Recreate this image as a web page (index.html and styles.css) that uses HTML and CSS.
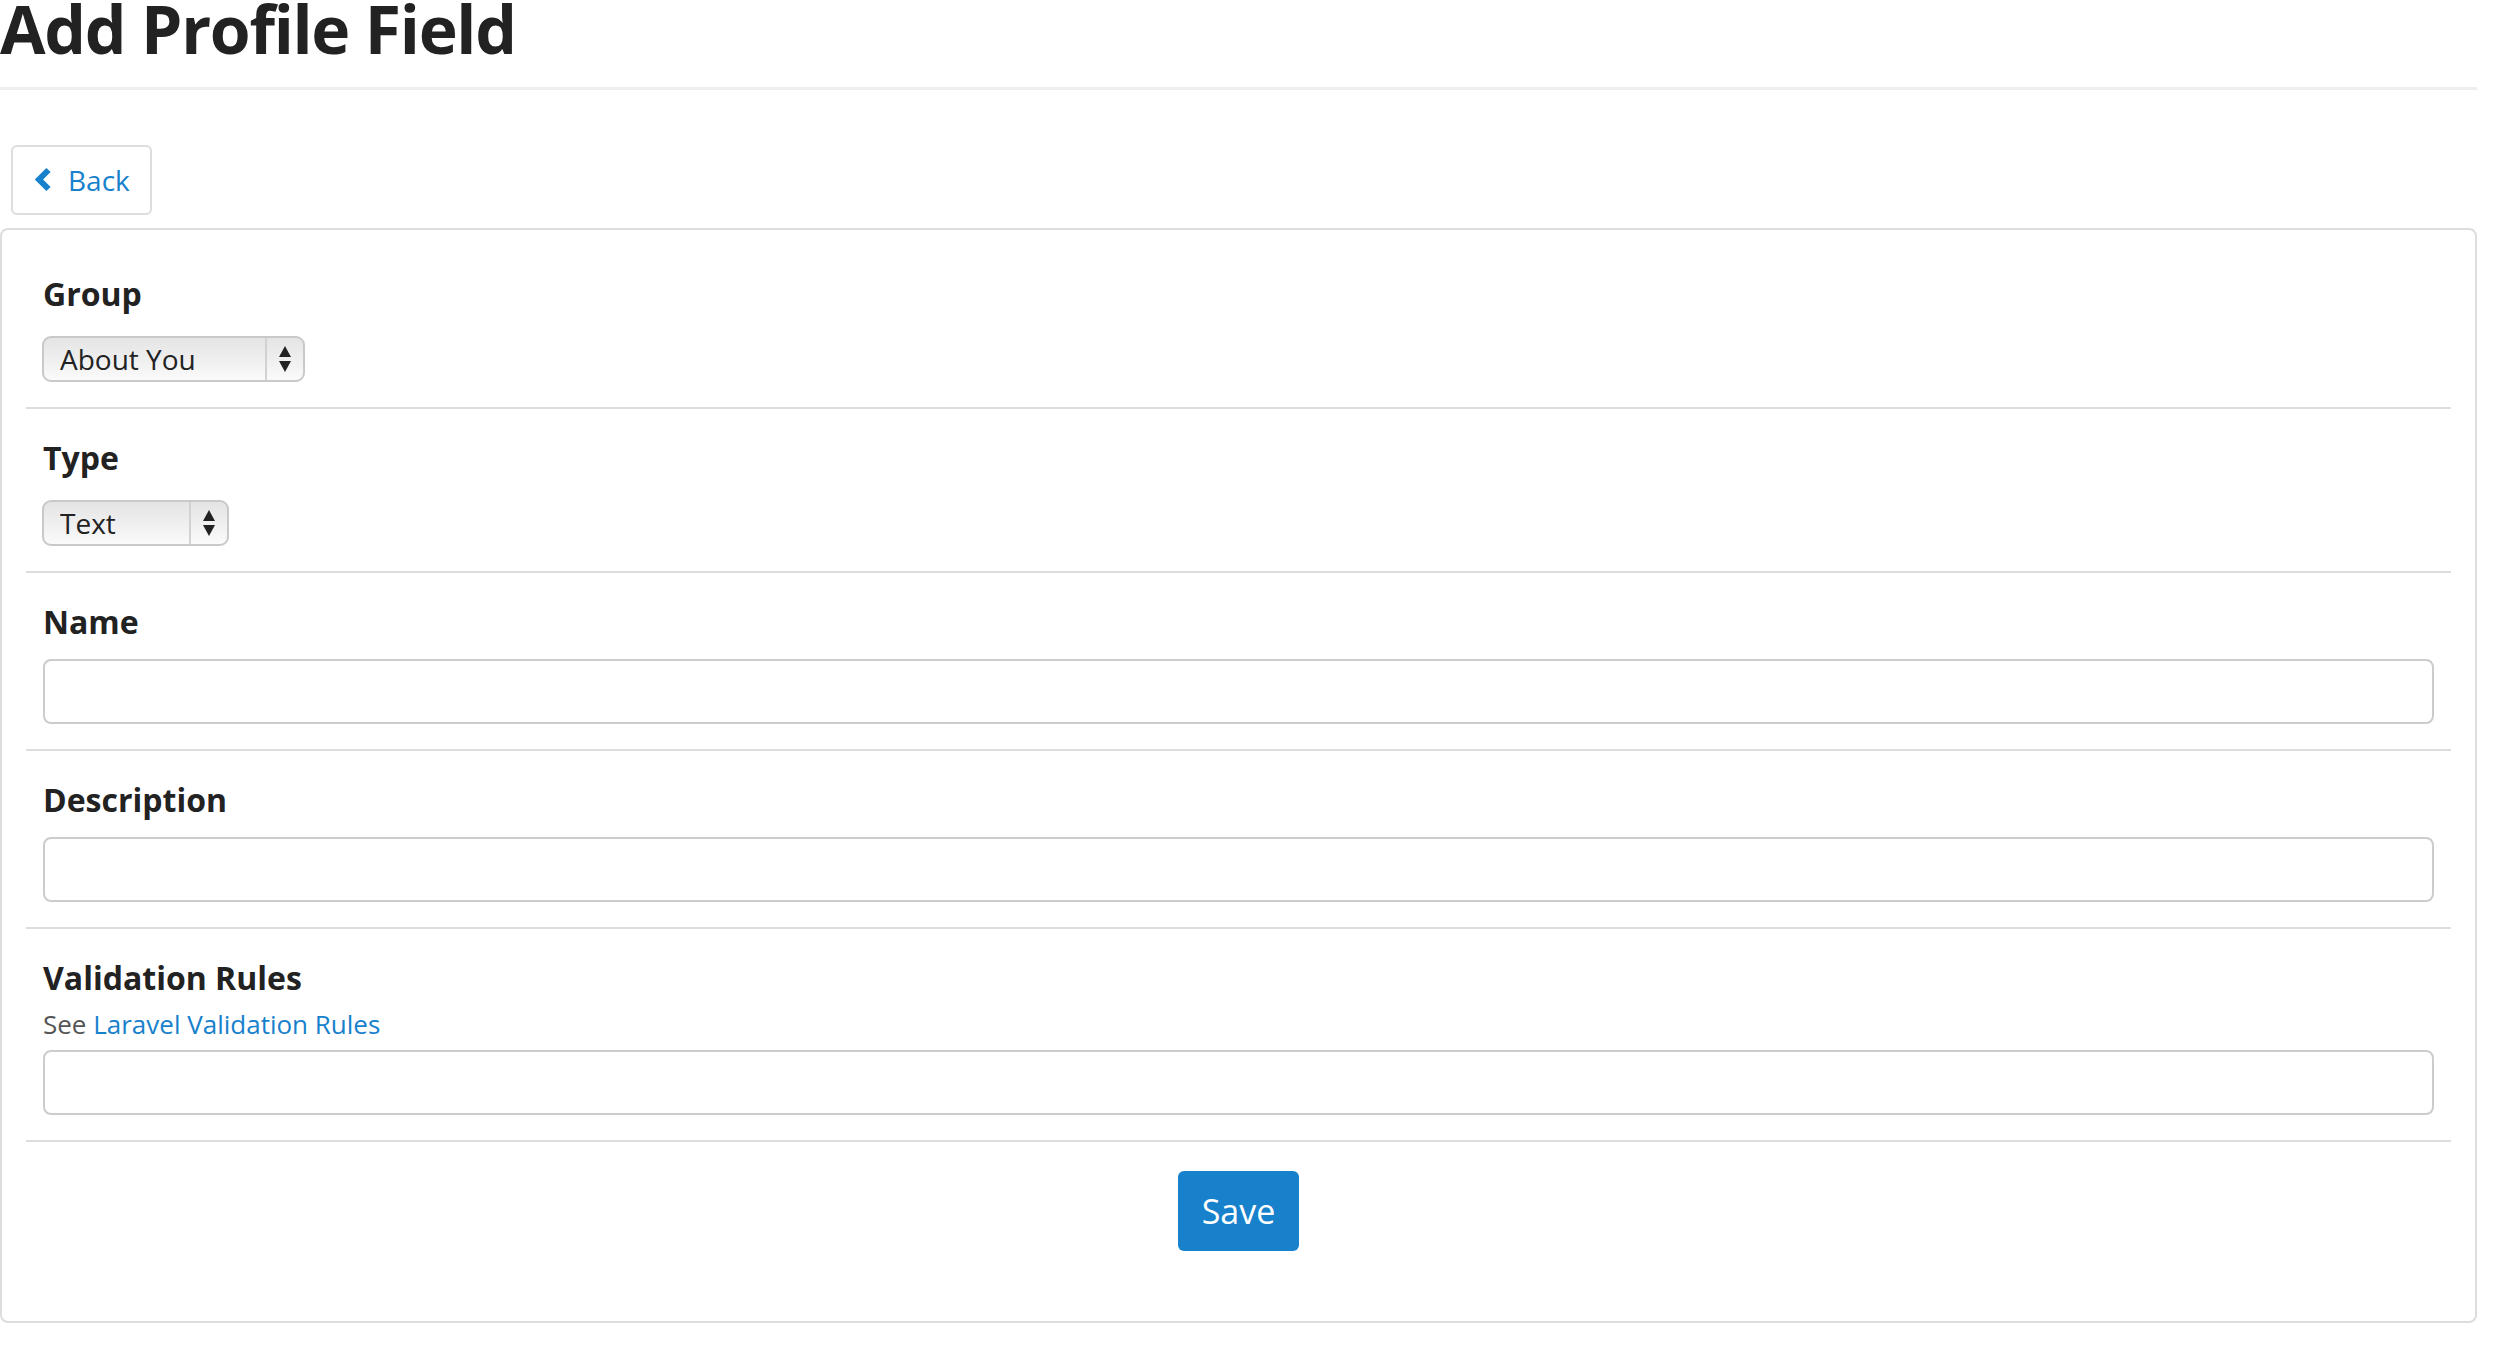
FILE: index.html
```html
<!DOCTYPE html>
<html lang="en">
<head>
    <meta charset="UTF-8">
    <meta name="viewport" content="width=device-width, initial-scale=1.0">
    <title>Add Profile Field</title>
    <link rel="stylesheet" href="styles.css">
</head>
<body>
    <div class="page">
        <header class="page-header">
            <h1>Add Profile Field</h1>
        </header>

        <div class="toolbar">
            <a class="btn-back" href="#">
                <svg class="chevron" width="17" height="25" viewBox="0 0 17 25">
                    <polyline points="14.5,3 5,12.5 14.5,22" fill="none" stroke="#1781cc" stroke-width="6" stroke-linejoin="miter"/>
                </svg>
                <span>Back</span>
            </a>
        </div>

        <form class="card" onsubmit="return false">
            <div class="field">
                <label class="field-label" for="group">Group</label>
                <div class="select-wrap select-group">
                    <select id="group">
                        <option>About You</option>
                    </select>
                    <span class="select-arrow">
                        <svg width="12" height="26" viewBox="0 0 12 26">
                            <polygon points="6,0 12,11 0,11" fill="#222"/>
                            <polygon points="0,15 12,15 6,26" fill="#222"/>
                        </svg>
                    </span>
                </div>
            </div>

            <div class="field">
                <label class="field-label" for="type">Type</label>
                <div class="select-wrap select-type">
                    <select id="type">
                        <option>Text</option>
                    </select>
                    <span class="select-arrow">
                        <svg width="12" height="26" viewBox="0 0 12 26">
                            <polygon points="6,0 12,11 0,11" fill="#222"/>
                            <polygon points="0,15 12,15 6,26" fill="#222"/>
                        </svg>
                    </span>
                </div>
            </div>

            <div class="field">
                <label class="field-label" for="name">Name</label>
                <input type="text" id="name" class="text-input">
            </div>

            <div class="field">
                <label class="field-label" for="description">Description</label>
                <input type="text" id="description" class="text-input">
            </div>

            <div class="field">
                <label class="field-label field-label-help" for="rules">Validation Rules</label>
                <p class="help">See <a href="#">Laravel Validation Rules</a></p>
                <input type="text" id="rules" class="text-input">
            </div>

            <div class="actions">
                <button type="submit" class="btn-save">Save</button>
            </div>
        </form>
    </div>
</body>
</html>
```

FILE: styles.css
```css
body {
    margin: 0;
    font-family: "Open Sans", "Liberation Sans", sans-serif;
    color: #222;
    background: #fff;
}
.page {
    width: 2477px;
}
.page-header {
    padding-bottom: 30px;
    border-bottom: 3px solid #eee;
}
.page-header h1 {
    margin: 0;
    font-size: 66px;
    line-height: 57px;
    letter-spacing: -1.3px;
    font-weight: 700;
    color: #222;
}
.toolbar {
    padding: 55px 0 13px 11px;
}
.btn-back {
    display: flex;
    align-items: center;
    box-sizing: border-box;
    height: 70px;
    width: 141px;
    padding: 0 0 0 21px;
    border: 2px solid #ddd;
    border-radius: 6px;
    color: #1781cc;
    text-decoration: none;
    font-size: 28px;
}
.chevron {
    margin-right: 17px;
    margin-top: -2px;
}
.card {
    border: 2px solid #ddd;
    border-radius: 8px;
    padding-top: 15px;
}
.field {
    margin: 0 24px;
    padding: 28px 17px 25px;
    border-bottom: 2px solid #ddd;
}
.field-label {
    display: block;
    font-size: 32px;
    line-height: 42px;
    font-weight: 700;
    margin-bottom: 16px;
}
.field-label-help {
    margin-bottom: 8px;
}
.help {
    margin: 0 0 8px;
    font-size: 26px;
    line-height: 35px;
    color: #555;
}
.help a {
    color: #1781cc;
    text-decoration: none;
}
.select-wrap {
    position: relative;
    margin-top: 21px;
    margin-left: -1px;
    height: 46px;
}
.select-group {
    width: 263px;
}
.select-type {
    width: 187px;
}
.select-wrap select {
    appearance: none;
    -webkit-appearance: none;
    width: 100%;
    height: 100%;
    box-sizing: border-box;
    border: 2px solid #c9c9c9;
    border-radius: 9px;
    background: linear-gradient(#e4e4e4, #fafafa);
    padding: 0 40px 0 16px;
    font-family: "Open Sans", "Liberation Sans", sans-serif;
    font-size: 28px;
    color: #222;
}
.select-arrow {
    position: absolute;
    top: 2px;
    right: 2px;
    bottom: 2px;
    width: 36px;
    border-left: 2px solid #d2d2d2;
    display: flex;
    align-items: center;
    justify-content: center;
    pointer-events: none;
}
.text-input {
    display: block;
    width: 100%;
    height: 65px;
    box-sizing: border-box;
    border: 2px solid #ccc;
    border-radius: 8px;
    font-size: 28px;
    padding: 0 14px;
}
.actions {
    display: flex;
    justify-content: center;
    padding: 29px 0 70px;
}
.btn-save {
    height: 80px;
    width: 121px;
    border: none;
    border-radius: 6px;
    background-color: #1781cc;
    color: #fff;
    font-family: "Open Sans", "Liberation Sans", sans-serif;
    font-size: 34px;
    cursor: pointer;
}
```
